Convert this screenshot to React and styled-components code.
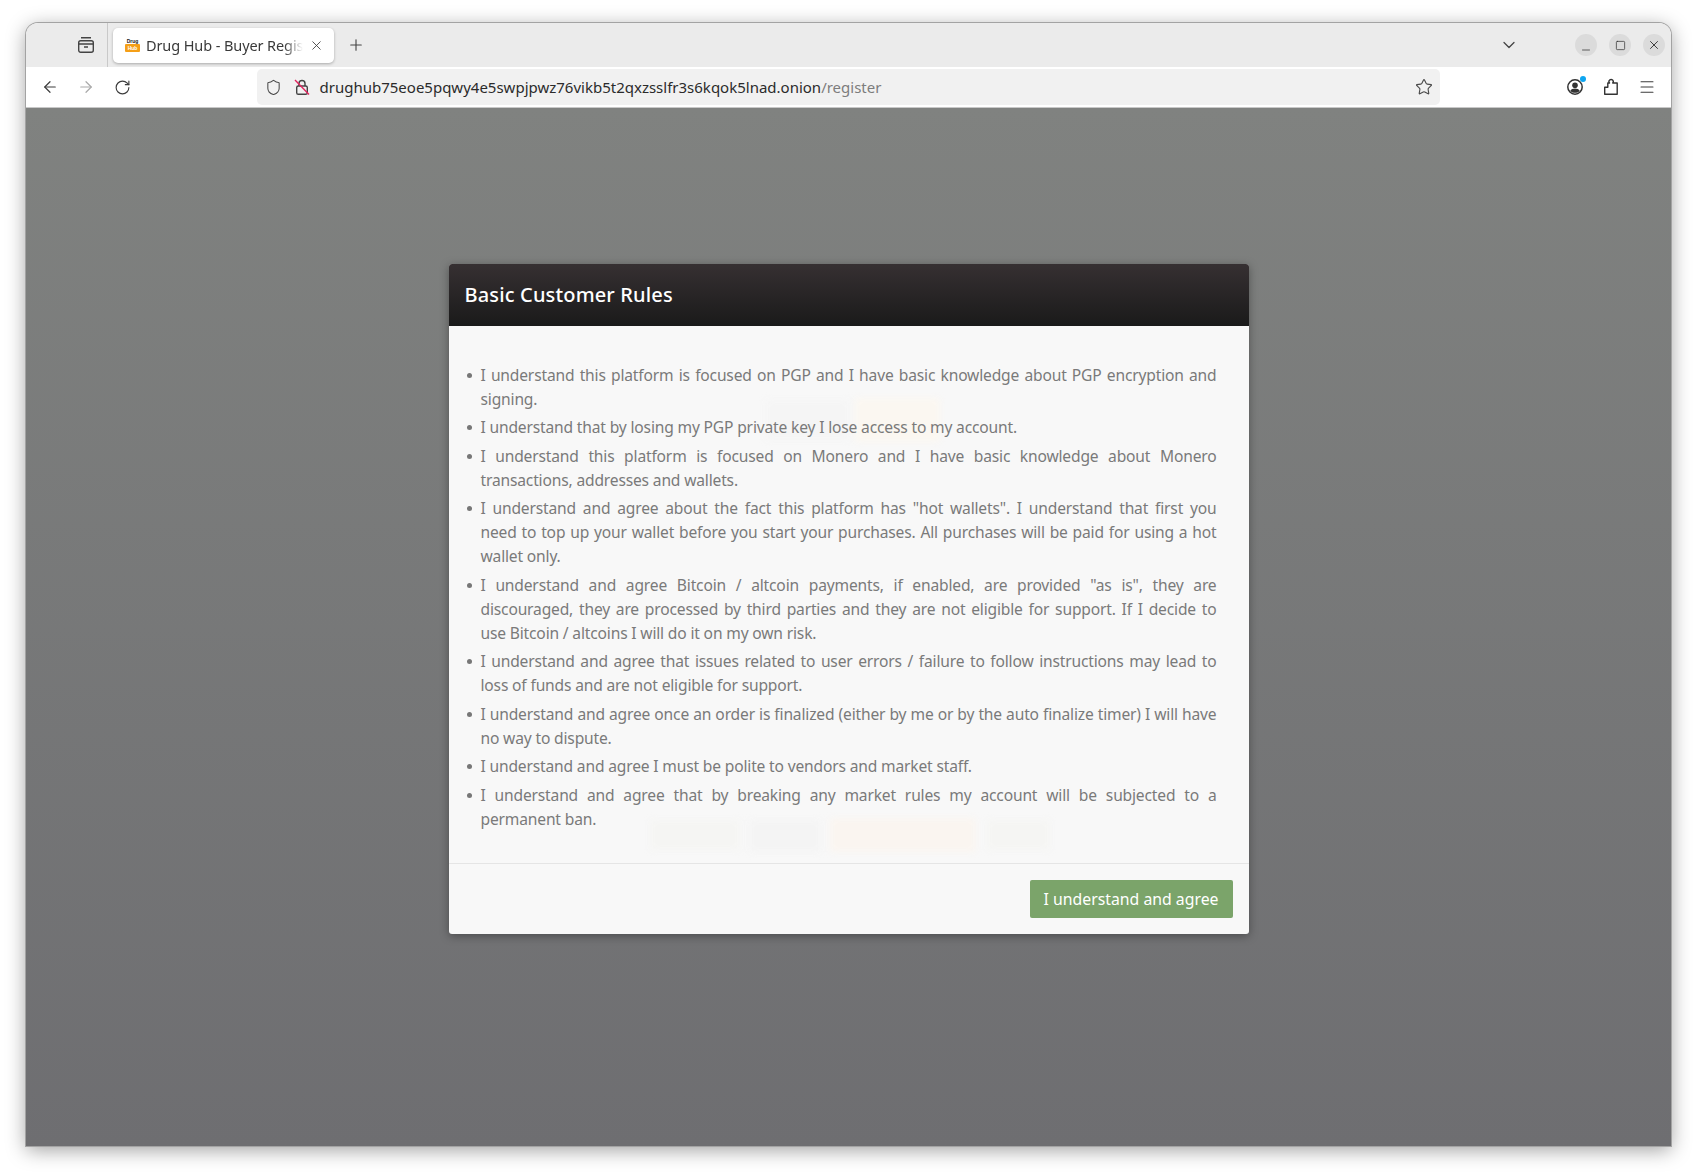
import styled, { createGlobalStyle } from "styled-components";
import {
  ArrowLeft,
  ArrowRight,
  RotateCw,
  Shield,
  Star,
  Menu,
  ChevronDown,
  Minus,
  Square,
  X,
  Plus,
} from "lucide-react";

const GlobalStyle = createGlobalStyle`
  html, body {
    margin: 0;
    padding: 0;
    background: #fff;
  }
  body {
    font-family: "Noto Sans", "Open Sans", sans-serif;
  }
`;

const Desktop = styled.div`
  width: 1697px;
  height: 1175px;
  box-sizing: border-box;
  padding: 23px 26px 29px 26px;
  overflow: hidden;
`;

const Window = styled.div`
  height: 100%;
  display: flex;
  flex-direction: column;
  border-radius: 12px 12px 0 0;
  overflow: hidden;
  box-shadow: 0 0 0 1px #a3a3a3, 0 4px 20px rgba(0, 0, 0, 0.38);
`;

const TabBar = styled.div`
  height: 44px;
  flex: none;
  background: #ebebeb;
  display: flex;
  align-items: flex-start;
  color: #3f3f3f;
`;

const ViewButton = styled.div`
  width: 82px;
  height: 44px;
  box-sizing: border-box;
  border-right: 1px solid #c9c9c9;
  display: flex;
  align-items: center;
  justify-content: flex-end;
  padding-right: 12px;
  color: #444;
`;

const Tab = styled.div`
  margin: 5px 0 0 5px;
  width: 221px;
  height: 35px;
  box-sizing: border-box;
  background: #fff;
  border-radius: 5px;
  box-shadow: 0 1px 3px rgba(0, 0, 0, 0.28);
  display: flex;
  align-items: center;
  padding: 0 10px 0 12px;
  gap: 6px;
`;

const Favicon = styled.div`
  width: 15px;
  height: 15px;
  flex: none;
  display: flex;
  flex-direction: column;
  align-items: center;
  font-family: "Liberation Sans", sans-serif;
  font-weight: 700;
  font-size: 5px;
  line-height: 6px;
  color: #222;
`;

const FaviconHub = styled.span`
  width: 100%;
  height: 8px;
  line-height: 8px;
  text-align: center;
  background: #f59f17;
  color: #fff;
  border-radius: 1px;
`;

const TabTitle = styled.div`
  flex: 1;
  min-width: 0;
  overflow: hidden;
  white-space: nowrap;
  font-size: 14.5px;
  letter-spacing: -0.1px;
  padding-bottom: 2px;
  color: #3a3a3a;
  -webkit-mask-image: linear-gradient(to right, #000 88%, transparent 100%);
  mask-image: linear-gradient(to right, #000 88%, transparent 100%);
`;

const NewTab = styled.div`
  margin-left: 11px;
  width: 22px;
  height: 44px;
  display: flex;
  align-items: center;
  justify-content: center;
  color: #444;
`;

const TabBarEnd = styled.div`
  margin-left: auto;
  height: 44px;
  display: flex;
  align-items: center;
  padding-right: 6px;
`;

const TabList = styled.div`
  margin-right: 56px;
  display: flex;
  color: #444;
`;

const WindowButtons = styled.div`
  display: flex;
  gap: 12px;
`;

const WindowButton = styled.div`
  width: 22px;
  height: 22px;
  border-radius: 50%;
  background: #dbdbdb;
  display: flex;
  align-items: ${(p) => (p.$low ? "flex-end" : "center")};
  justify-content: center;
  color: #333;
`;

const ToolBar = styled.div`
  height: 41px;
  flex: none;
  box-sizing: border-box;
  background: #fff;
  border-bottom: 1px solid #c8c8c8;
  display: flex;
  align-items: center;
  padding: 0 14px 0 14px;
  color: #3c3c3c;
`;

const NavButtons = styled.div`
  display: flex;
  gap: 16px;
  margin-right: 125px;
`;

const NavIcon = styled.div`
  width: 20px;
  height: 20px;
  display: flex;
  align-items: center;
  justify-content: center;
  color: ${(p) => (p.$dim ? "#a9a9a9" : "#3c3c3c")};
`;

const UrlBar = styled.div`
  width: 1183px;
  height: 36px;
  box-sizing: border-box;
  background: #f1f1f1;
  border-radius: 5px;
  display: flex;
  align-items: center;
  padding: 0 7px 0 7px;
`;

const UrlIcon = styled.div`
  width: 18px;
  height: 18px;
  margin-left: ${(p) => p.$gap}px;
  display: flex;
  align-items: center;
  justify-content: center;
  color: #4a4a4a;
  flex: none;
`;

const UrlText = styled.div`
  margin-left: 9px;
  font-size: 15px;
  color: #2b2b2b;
  white-space: nowrap;
  flex: 1;
  min-width: 0;
`;

const UrlPath = styled.span`
  color: #7d7d7d;
`;

const ToolIcons = styled.div`
  margin-left: auto;
  display: flex;
  gap: 16px;
`;

const AccountDot = styled.span`
  position: absolute;
  top: -1px;
  right: -1px;
  width: 6px;
  height: 6px;
  border-radius: 50%;
  background: #0ea5f0;
`;

const AccountIcon = styled(NavIcon)`
  position: relative;
`;

const Content = styled.div`
  flex: 1;
  background: linear-gradient(#808280, #6e6e71);
  display: flex;
  justify-content: center;
  align-items: flex-start;
  padding-top: 156px;
`;

const Modal = styled.div`
  position: relative;
  width: 800px;
  border-radius: 3px;
  overflow: hidden;
  background: #f8f8f8;
  box-shadow: 0 2px 10px rgba(0, 0, 0, 0.35);
`;

const ModalHeader = styled.div`
  height: 62px;
  box-sizing: border-box;
  background: linear-gradient(#363032, #1a1a1a);
  padding: 0 16px 2px;
  display: flex;
  align-items: center;
`;

const ModalTitle = styled.h4`
  margin: 0;
  font-size: 20px;
  font-weight: 500;
  color: #fff;
  letter-spacing: 0.15px;
`;

const ModalBody = styled.div`
  position: relative;
  padding: 36.7px 32px 27.4px 32px;
`;

const Ghost = styled.span`
  position: absolute;
  left: ${(p) => p.$x}px;
  top: ${(p) => p.$y}px;
  width: ${(p) => p.$w}px;
  height: ${(p) => p.$h}px;
  background: ${(p) => p.$c};
  filter: blur(3px);
  border-radius: 3px;
`;

const RuleList = styled.ul`
  position: relative;
  margin: 0;
  padding: 0;
  list-style: none;
  font-size: 15.6px;
  letter-spacing: -0.17px;
  line-height: 24px;
  color: #7a7a7a;
  text-align: justify;
`;

const Rule = styled.li`
  position: relative;
  margin-bottom: 4.5px;
  &::before {
    content: "";
    position: absolute;
    left: -14px;
    top: 10px;
    width: 5px;
    height: 5px;
    border-radius: 50%;
    background: #777;
  }
`;

const ModalFooter = styled.div`
  border-top: 1px solid #e5e5e5;
  padding: 16px 16px 16px;
  display: flex;
  justify-content: flex-end;
`;

const AgreeButton = styled.button`
  width: 203px;
  height: 38px;
  border: 0;
  border-radius: 2px;
  background: #7ba46a;
  color: #fff;
  font-family: inherit;
  font-size: 15.8px;
  padding: 0;
`;

// non-breaking spaces keep the line breaks where the original font put them
const rules = [
  "I understand this platform is focused on PGP and I have basic knowledge about PGP encryption and signing.",
  "I understand that by losing my PGP private key I lose access to my account.",
  "I understand this platform is focused on Monero and I have basic knowledge about Monero transactions, addresses and wallets.",
  'I understand and agree about the fact this platform has "hot wallets". I understand that first you need\u00a0to top up your wallet before you start your purchases. All purchases will be paid for using a hot wallet\u00a0only.',
  'I understand and agree Bitcoin / altcoin payments, if enabled, are provided "as is", they are discouraged, they are processed by third parties and they are not eligible for support. If I decide to use\u00a0Bitcoin / altcoins I will do it on my own risk.',
  "I understand and agree that issues related to user errors / failure to follow instructions may lead to loss of funds and are not eligible for support.",
  "I understand and agree once an order is finalized (either by me or by the auto finalize timer) I will have no way to dispute.",
  "I understand and agree I must be polite to vendors and market staff.",
  "I understand and agree that by breaking any market rules my account will be subjected to a permanent ban.",
];

const ghosts = [
  { x: 316, y: 74, w: 85, h: 40, c: "#f5f5f5" },
  { x: 406, y: 72, w: 85, h: 44, c: "#fbf7f1" },
  { x: 201, y: 494, w: 90, h: 30, c: "#f5f5f3" },
  { x: 300, y: 494, w: 72, h: 32, c: "#f4f4f4" },
  { x: 381, y: 492, w: 146, h: 34, c: "#faf5f0" },
  { x: 538, y: 494, w: 63, h: 30, c: "#f5f5f3" },
];

const ViewIcon = () => (
  <svg width="18" height="18" viewBox="0 0 18 18" fill="none" stroke="currentColor" strokeWidth="1.4">
    <path d="M4 1.7h10" />
    <rect x="1.7" y="4.7" width="14.6" height="11.6" rx="2" />
    <path d="M1.7 8h14.6M7 11h4" />
  </svg>
);

const LockOffIcon = () => (
  <svg width="18" height="18" viewBox="0 0 18 18" fill="none" stroke="#444" strokeWidth="1.4">
    <path d="M6 8V5.5a3 3 0 0 1 6 0V8" />
    <rect x="3.7" y="8" width="10.6" height="8.3" rx="1.6" />
    <path d="M2 2l14 14.5" stroke="#e0245e" />
  </svg>
);

const AccountGlyph = () => (
  <svg width="18" height="18" viewBox="0 0 18 18" fill="none">
    <circle cx="9" cy="9" r="7.2" stroke="#333" strokeWidth="1.5" />
    <circle cx="9" cy="7.2" r="2.8" fill="#333" />
    <path d="M4.2 13c1-2 2.800-2.600 4.800-2.600s3.800.6 4.800 2.600c-1.300 1.300-3 1.800-4.800 1.800s-3.500-.5-4.800-1.800z" fill="#333" />
  </svg>
);

const ExtensionIcon = () => (
  <svg width="18" height="18" viewBox="0 0 18 18" fill="none" stroke="#333" strokeWidth="1.4" strokeLinejoin="round">
    <path d="M2.700 16.300H15.200V5H10.700a2.100 2.100 0 1 0-3.200 0H5.800V9.200H2.700z" />
  </svg>
);

export default function App() {
  return (
    <>
      <GlobalStyle />
      <Desktop>
        <Window>
          <TabBar>
            <ViewButton>
              <ViewIcon />
            </ViewButton>
            <Tab>
              <Favicon>
                Drug
                <FaviconHub>Hub</FaviconHub>
              </Favicon>
              <TabTitle>Drug Hub - Buyer Registration</TabTitle>
              <X size={15} strokeWidth={1.4} />
            </Tab>
            <NewTab>
              <Plus size={18} strokeWidth={1.5} />
            </NewTab>
            <TabBarEnd>
              <TabList>
                <ChevronDown size={20} strokeWidth={1.5} />
              </TabList>
              <WindowButtons>
                <WindowButton $low>
                  <Minus size={12} strokeWidth={1.5} />
                </WindowButton>
                <WindowButton>
                  <Square size={11} strokeWidth={1.6} />
                </WindowButton>
                <WindowButton>
                  <X size={14} strokeWidth={1.6} />
                </WindowButton>
              </WindowButtons>
            </TabBarEnd>
          </TabBar>
          <ToolBar>
            <NavButtons>
              <NavIcon>
                <ArrowLeft size={18} strokeWidth={1.6} />
              </NavIcon>
              <NavIcon $dim>
                <ArrowRight size={18} strokeWidth={1.6} />
              </NavIcon>
              <NavIcon>
                <RotateCw size={17} strokeWidth={1.6} />
              </NavIcon>
            </NavButtons>
            <UrlBar>
              <UrlIcon $gap={0}>
                <Shield size={17} strokeWidth={1.5} />
              </UrlIcon>
              <UrlIcon $gap={10.5}>
                <LockOffIcon />
              </UrlIcon>
              <UrlText>
                drughub75eoe5pqwy4e5swpjpwz76vikb5t2qxzsslfr3s6kqok5lnad.onion
                <UrlPath>/register</UrlPath>
              </UrlText>
              <UrlIcon $gap={0}>
                <Star size={18} strokeWidth={1.5} />
              </UrlIcon>
            </UrlBar>
            <ToolIcons>
              <AccountIcon>
                <AccountGlyph />
                <AccountDot />
              </AccountIcon>
              <NavIcon>
                <ExtensionIcon />
              </NavIcon>
              <NavIcon>
                <Menu size={18} strokeWidth={1.4} />
              </NavIcon>
            </ToolIcons>
          </ToolBar>
          <Content>
            <Modal>
              <ModalHeader>
                <ModalTitle>Basic Customer Rules</ModalTitle>
              </ModalHeader>
              <ModalBody>
                {ghosts.map((g, i) => (
                  <Ghost key={i} $x={g.x} $y={g.y} $w={g.w} $h={g.h} $c={g.c} />
                ))}
                <RuleList>
                  {rules.map((r) => (
                    <Rule key={r}>{r}</Rule>
                  ))}
                </RuleList>
              </ModalBody>
              <ModalFooter>
                <AgreeButton>I understand and agree</AgreeButton>
              </ModalFooter>
            </Modal>
          </Content>
        </Window>
      </Desktop>
    </>
  );
}
